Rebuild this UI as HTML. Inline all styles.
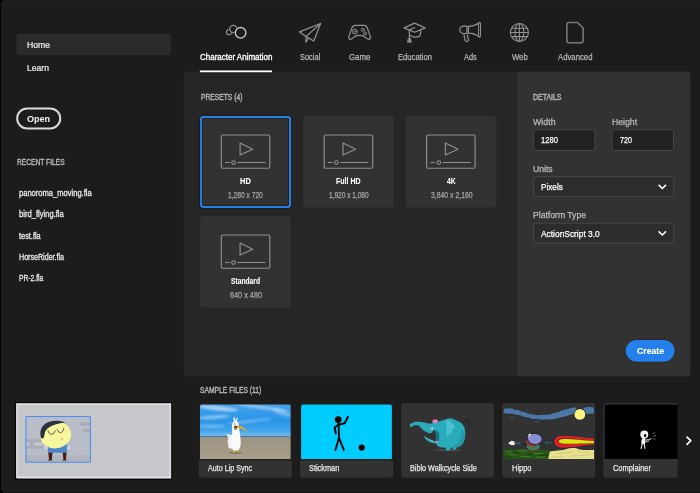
<!DOCTYPE html>
<html lang="en">
<head>
<meta charset="utf-8">
<title>New Document</title>
<style>
html,body{margin:0;padding:0;}
body{width:700px;height:493px;overflow:hidden;background:#1c1c1c;position:relative;font-family:"Liberation Sans",sans-serif;}
#ui{position:absolute;left:0;top:0;}
.t{position:absolute;white-space:nowrap;display:inline-block;transform-origin:0 50%;font-family:"Liberation Sans",sans-serif;}
</style>
</head>
<body>
<svg id="ui" width="700" height="493" viewBox="0 0 700 493">
  <!-- window frame -->
  <rect x="0" y="0" width="700" height="493" fill="#181818"/>
  <rect x="0" y="491.4" width="700" height="1.6" fill="#131313"/>
  <rect x="0" y="0" width="3" height="3" fill="#000"/>
  <rect x="0" y="489.5" width="3" height="3.5" fill="#000"/>
  <rect x="1.3" y="1.4" width="702" height="489.9" rx="3" fill="#1c1c1c" stroke="#252525" stroke-width="0.8"/>
  <rect x="0" y="0" width="0.9" height="493" fill="#000"/>

  <!-- sidebar -->
  <rect x="16.3" y="33.7" width="154.8" height="21.2" rx="2" fill="#2b2b2b"/>
  <rect x="17.2" y="108.4" width="43" height="20" rx="10" fill="none" stroke="#dadada" stroke-width="2"/>
  <!-- main panel -->
  <rect x="183.9" y="71.8" width="506.4" height="304.5" rx="3" fill="#262626"/>
  <path d="M517.3 71.8 H687.3 A3 3 0 0 1 690.3 74.8 V373.3 A3 3 0 0 1 687.3 376.3 H517.3 Z" fill="#323232"/>
  <!-- active tab underline -->
  <rect x="199" y="69.5" width="74" height="3.7" fill="#0c0c0c"/>
  <rect x="199.8" y="70.4" width="72.3" height="1.9" fill="#ffffff"/>
  <rect x="200.2" y="116" width="90.6" height="91.6" rx="3" fill="#323232"/>
  <rect x="199.29999999999998" y="115.1" width="92.39999999999999" height="93.39999999999999" rx="3.6" fill="none" stroke="#1a0f08" stroke-opacity="0.55" stroke-width="1"/>
  <rect x="202.5" y="118.2" width="86.19999999999999" height="87.19999999999999" rx="1.2" fill="none" stroke="#231811" stroke-width="0.7"/>
  <rect x="201.1" y="116.9" width="89.0" height="90.0" rx="2.4" fill="none" stroke="#2680eb" stroke-width="2"/>
  <g transform="translate(220.1 133.6)" fill="none" stroke="#909090" stroke-width="1.15"><rect x="1.2" y="1.4" width="48.5" height="33.2" rx="1.5"/><path d="M20 9.5 L32.6 15.6 L20 21.4 Z" stroke-linejoin="round"/><path d="M5 28.9 H9.6 M17.2 28.9 H45.4"/><circle cx="13.4" cy="28.9" r="1.8"/></g>
  <rect x="303.1" y="116" width="90.6" height="91.6" rx="3" fill="#323232"/>
  <g transform="translate(323.0 133.6)" fill="none" stroke="#909090" stroke-width="1.15"><rect x="1.2" y="1.4" width="48.5" height="33.2" rx="1.5"/><path d="M20 9.5 L32.6 15.6 L20 21.4 Z" stroke-linejoin="round"/><path d="M5 28.9 H9.6 M17.2 28.9 H45.4"/><circle cx="13.4" cy="28.9" r="1.8"/></g>
  <rect x="405.5" y="116" width="90.6" height="91.6" rx="3" fill="#323232"/>
  <g transform="translate(425.4 133.6)" fill="none" stroke="#909090" stroke-width="1.15"><rect x="1.2" y="1.4" width="48.5" height="33.2" rx="1.5"/><path d="M20 9.5 L32.6 15.6 L20 21.4 Z" stroke-linejoin="round"/><path d="M5 28.9 H9.6 M17.2 28.9 H45.4"/><circle cx="13.4" cy="28.9" r="1.8"/></g>
  <rect x="200.2" y="216" width="90.6" height="91.6" rx="3" fill="#323232"/>
  <g transform="translate(220.1 233.6)" fill="none" stroke="#909090" stroke-width="1.15"><rect x="1.2" y="1.4" width="48.5" height="33.2" rx="1.5"/><path d="M20 9.5 L32.6 15.6 L20 21.4 Z" stroke-linejoin="round"/><path d="M5 28.9 H9.6 M17.2 28.9 H45.4"/><circle cx="13.4" cy="28.9" r="1.8"/></g>
  <!-- form fields -->
  <rect x="533.6" y="129.7" width="61.4" height="20.8" rx="2.5" fill="#212121" stroke="#464646" stroke-width="1"/>
  <rect x="611.9" y="129.7" width="61.6" height="20.8" rx="2.5" fill="#212121" stroke="#464646" stroke-width="1"/>
  <rect x="533.6" y="176.6" width="140.2" height="19.9" rx="2.5" fill="#2c2c2c" stroke="#444444" stroke-width="1.1"/>
  <rect x="533.6" y="223.2" width="140.2" height="19.9" rx="2.5" fill="#2c2c2c" stroke="#444444" stroke-width="1.1"/>
  <!-- create -->
  <rect x="625.2" y="339.4" width="49.9" height="22.9" rx="11.45" fill="#2a2018"/>
  <rect x="625.7" y="339.9" width="48.9" height="21.9" rx="10.95" fill="#2680eb"/>

  <!-- tab icons -->
  <g fill="none" stroke-width="1.2" stroke-linecap="round" stroke-linejoin="round">

  <!-- character animation -->
  <g>
    <circle cx="229" cy="32.2" r="2.6" stroke="#8e8e8e" stroke-width="1.1"/>
    <circle cx="233.3" cy="29" r="4.6" fill="#1c1c1c" stroke="none"/>
    <circle cx="233.3" cy="29" r="3.6" stroke="#909090" stroke-width="1.2"/>
    <circle cx="240.6" cy="32.8" r="6.6" fill="#1c1c1c" stroke="none"/>
    <circle cx="240.6" cy="32.8" r="5.3" stroke="#c6c6c6" stroke-width="1.4"/>
  </g>
  <g stroke="#939393">
    <!-- social paper plane -->
    <path d="M320.6 23.5 L299.5 31.9 L306 36.6 L313.8 41 Z"/>
    <path d="M320.6 23.5 L306 36.6 L306 42.2 L308.5 38.1"/>
    <!-- game -->
    <path d="M355.3 25.4 H364 C366 25.4 367 26.8 367.6 28.7 L370.2 36.1 C370.8 38 370 39.2 368.6 39.3 C367.6 39.4 366.8 38.8 365.6 37.4 C364.2 36 362.4 35.4 359.6 35.4 C356.8 35.4 355 36 353.6 37.4 C352.4 38.8 351.6 39.4 350.6 39.3 C349.2 39.2 348.4 38 349 36.1 L351.6 28.7 C352.2 26.8 353.2 25.4 355.3 25.4 Z"/>
    <circle cx="354.9" cy="31.6" r="2.5" stroke-width="1"/>
    <circle cx="354.9" cy="31.6" r="0.7" stroke-width="0.9"/>
    <circle cx="362.7" cy="29.8" r="1.5" stroke-width="1"/>
    <circle cx="365" cy="33.4" r="1.5" stroke-width="1"/>
    <!-- education -->
    <path d="M414.5 23.1 L425.2 27.9 L414.5 32.2 L404.1 27.9 Z"/>
    <path d="M420.6 30 V33.5 C420.6 35.8 418 37.1 415.1 37.1 C413.2 37.1 411.6 36.4 410.4 35.4"/>
    <path d="M414.7 27.5 L409.4 30 V38.2"/>
    <path d="M408.7 38.4 H410.4 L411.4 42.2 H407.7 Z" fill="#8a8a8a" stroke-width="0.8"/>
    <!-- ads -->
    <path d="M467 26.1 H463.5 C461.4 26.1 459.8 27.8 459.8 29.8 C459.8 31.8 461.4 33.5 463.5 33.5 H467 Z"/>
    <path d="M468.4 26.4 C472 26.4 476.4 25 479.6 22.6 M468.4 33.2 C472 33.2 476.4 34.6 479.6 37 M468.4 26.4 V33.2"/>
    <path d="M479.7 22.5 L480.5 23 V36.6 L479.7 37.1 L478.6 35.6 V24 Z" stroke-width="1"/>
    <path d="M464 34.8 L465.2 40.6 C465.5 41.6 466.4 41.8 467.2 41.5 C468.2 41.2 468.7 40.6 468.5 39.8 L467.3 34.8"/>
    <!-- web -->
    <g stroke-width="1.05">
    <circle cx="519.4" cy="32.4" r="9"/>
    <ellipse cx="519.4" cy="32.4" rx="4.4" ry="9"/>
    <path d="M519.4 23.4 V41.4 M510.4 32.4 H528.4 M511.6 28.2 H527.2 M511.6 36.6 H527.2"/>
    </g>
    <!-- advanced -->
    <path d="M569 22.5 H577.4 L583.1 28 V40.8 C583.1 42 582.2 42.8 581.1 42.8 H569 C567.8 42.8 566.9 42 566.9 40.8 V24.5 C566.9 23.4 567.8 22.5 569 22.5 Z" stroke="#787878" stroke-width="1.6"/>
  </g>

  </g>
  <!-- select chevrons -->
  <g fill="none" stroke="#ffffff" stroke-width="1.55">
    <path d="M658.6 184.9 L662.3 188.5 L666 184.9"/>
    <path d="M658.6 231.4 L662.3 235 L666 231.4"/>
  </g>
  <!-- recent thumbnail -->
  <rect x="15.06" y="402.07" width="157.24" height="77.93" fill="#060606"/>
  <rect x="16.15" y="403.25" width="154.95" height="75.05" fill="#f3f3f6"/>
  <rect x="17.45" y="476.8" width="153.65" height="1.5" fill="#e6e8ee"/>
  <rect x="169.1" y="404.55" width="2" height="72.25" fill="#d2d5dd"/>
  <rect x="17.45" y="404.55" width="151.65" height="72.25" fill="#c5c7cb"/>
<clipPath id="rclip"><rect x="25.9" y="416.5" width="64.5" height="45.8"/></clipPath>
<g clip-path="url(#rclip)">
  <rect x="26" y="416.5" width="64.4" height="45.8" fill="#b9bdc8"/>
  <rect x="26" y="455.4" width="64.4" height="6.9" fill="#b0b4bf"/>
  <rect x="79.6" y="422.2" width="11" height="3" rx="1.5" fill="#a9acb4"/>
  <rect x="82.6" y="428.9" width="8" height="3" rx="1.5" fill="#a9acb4"/>
  <rect x="24" y="439.2" width="19" height="9.6" rx="2" fill="#aaadb6"/>
  <rect x="33.4" y="442.4" width="10" height="3.4" rx="1.7" fill="#c3c6cf"/>
  <rect x="24" y="442.4" width="6" height="3.4" rx="1.7" fill="#c3c6cf"/>
  <!-- arms -->
  <ellipse cx="45.6" cy="447.6" rx="2.5" ry="3.5" fill="#c9ccd6" stroke="#86a4d4" stroke-width="0.6"/>
  <ellipse cx="69.4" cy="447.6" rx="2.5" ry="3.5" fill="#c9ccd6" stroke="#86a4d4" stroke-width="0.6"/>
  <!-- legs -->
  <path d="M48.2 452 H52.6 L51.8 459.2 L52.4 460.4 H47.8 L49 459.2 Z" fill="#4a1b10"/>
  <path d="M62.6 452 H66.6 L66 459.2 L66.8 460.4 H62.4 L63.4 459.2 Z" fill="#4a1b10"/>
  <!-- body -->
  <path d="M48 444 H66.8 L66.8 452.8 H48 Z" fill="#4a86c9"/>
  <!-- head -->
  <ellipse cx="55.8" cy="435.2" rx="15.4" ry="13.2" fill="#f6f79c" transform="rotate(-12 55.8 435.2)"/>
  <!-- hair -->
  <path d="M41 438 C39.4 433 40.6 427 45.6 423.6 C51 420 59.4 420.2 65.4 422.6 C60 423 54 424.6 49.6 427 C46.4 428.8 45 431 44.6 434 C44.4 435.6 44 437 43.4 438.4 Z" fill="#2b303e"/>
  <!-- eyes -->
  <path d="M48 430.8 C48.8 435.4 54.2 435.6 55.2 430.8" stroke="#2b303e" stroke-width="0.8" fill="none" stroke-linecap="round"/>
  <path d="M57.2 429.6 C58.6 434 63.2 433.8 63.8 428.2" stroke="#2b303e" stroke-width="0.8" fill="none" stroke-linecap="round"/>
  <path d="M60.8 439.4 L62.2 438.4 L63 439.4" stroke="#e08a8a" stroke-width="0.7" fill="none" stroke-linecap="round"/>
</g>
  <rect x="25.9" y="416.5" width="64.5" height="45.8" rx="0.8" fill="none" stroke="#4b8df2" stroke-width="1.1"/>

  <!-- sample cards -->
  <clipPath id="sclip"><rect x="190" y="398" width="487.6" height="90"/></clipPath>
  <g clip-path="url(#sclip)">
    <clipPath id="imgclip"><path d="M0 55 V2.2 A2.2 2.2 0 0 1 2.2 0 H88.8 A2.2 2.2 0 0 1 91 2.2 V55 Z"/></clipPath>
    <!-- Auto Lip Sync -->
    <rect x="198.9" y="403.1" width="93" height="74.6" rx="3" fill="#323232"/>
    <path d="M198.9 460.4 V406.1 A3 3 0 0 1 201.9 403.1 H288.9 A3 3 0 0 1 291.9 406.1 V460.4 Z" fill="#231c19"/>
    <svg x="199.95" y="404.2" width="90.9" height="54.9" viewBox="0 0 91 55" preserveAspectRatio="none"><g clip-path="url(#imgclip)">
  <defs>
    <linearGradient id="sky" x1="0" y1="0" x2="0" y2="1">
      <stop offset="0" stop-color="#45a1ea"/><stop offset="0.5" stop-color="#2895e8"/><stop offset="0.82" stop-color="#43a4ea"/><stop offset="1" stop-color="#7fc2f0"/>
    </linearGradient>
    <linearGradient id="sand" x1="0" y1="0" x2="0" y2="1">
      <stop offset="0" stop-color="#9c9382"/><stop offset="1" stop-color="#a89e8b"/>
    </linearGradient>
    <filter id="bl" x="-20%" y="-50%" width="140%" height="200%"><feGaussianBlur stdDeviation="1.3"/></filter>
  </defs>
  <rect width="91" height="32.6" fill="url(#sky)"/>
  <g filter="url(#bl)" fill="#ffffff">
    <ellipse cx="18" cy="4" rx="20" ry="2.2" opacity="0.55" transform="rotate(6 18 4)"/>
    <ellipse cx="60" cy="3" rx="28" ry="1.6" opacity="0.4" transform="rotate(8 60 3)"/>
    <ellipse cx="14" cy="13" rx="16" ry="2" opacity="0.4" transform="rotate(-4 14 13)"/>
    <ellipse cx="50" cy="17" rx="22" ry="1.5" opacity="0.3" transform="rotate(-6 50 17)"/>
    <ellipse cx="12" cy="22" rx="14" ry="1.5" opacity="0.3"/>
    <ellipse cx="82" cy="8" rx="10" ry="3" opacity="0.3" transform="rotate(20 82 8)"/>
  </g>
  <rect y="31.8" width="91" height="1.1" fill="#3a74a8"/>
  <rect y="32.8" width="91" height="23" fill="url(#sand)"/>
  <ellipse cx="36" cy="48.5" rx="6" ry="1.2" fill="#5f584e" opacity="0.75"/>
  <path d="M34.2 46 L33 48 L35.4 48.2 M37.4 46 L38 47.8 L40 47.6" stroke="#e6b21c" stroke-width="1.1" stroke-linecap="round" stroke-linejoin="round" fill="none"/>
  <path d="M32.4 31 C30.4 30.8 28 30.2 26.6 29 C27.2 31.6 28 33.4 28.6 35 C27.8 35.2 27.6 36 27.8 37 C28 39.6 28 42 28.8 43.6 C29.8 44.6 31 44.8 32 44.6 Z" fill="#f1f1f1"/>
  <path d="M33.6 16.4 C33 14.4 33.6 12.8 35.2 12.2 C34.8 13.6 35 14.8 35.6 16 C36.2 14.6 37 13.6 38.2 13.4 C37.4 14.6 37.2 15.8 37.2 17 Z" fill="#f4f4f4"/>
  <path d="M35.4 16.8 C37.4 16.8 38.6 18.4 38.8 20.6 C39.2 24 39.6 27 40 30 C40.6 34 41.2 38 40.6 42 C40 45 38.4 46.6 35.8 46.6 C33 46.6 31.4 44.6 31.2 41.6 C31 37.6 31.8 33 32.2 29 C32.4 26 32 23 32.2 20.6 C32.4 18.4 33.6 16.8 35.4 16.8 Z" fill="#fafafa"/>
  <path d="M34.2 22 C35.4 21.2 37 21.4 37.8 22.2 C37.6 23.8 37 25.2 35.8 25.6 C34.6 25.4 34 24 34.2 22 Z" fill="#6e2a10"/>
  <ellipse cx="36" cy="24.2" rx="0.9" ry="0.8" fill="#e0a020"/>
  <path d="M37.4 21.2 C41.6 21.4 45.6 24 47.6 28.8 C44.6 25.6 41.4 24 37.8 23.6 Z" fill="#eaa91c"/>
  <circle cx="35" cy="19.8" r="0.6" fill="#555"/>
</g></svg>
    <!-- Stickman -->
    <rect x="300.0" y="403.1" width="93" height="74.6" rx="3" fill="#323232"/>
    <path d="M300.0 460.4 V406.1 A3 3 0 0 1 303.0 403.1 H390.0 A3 3 0 0 1 393.0 406.1 V460.4 Z" fill="#231c19"/>
    <svg x="301.05" y="404.2" width="90.9" height="54.9" viewBox="0 0 91 55" preserveAspectRatio="none"><g clip-path="url(#imgclip)">
  <rect width="91" height="55" fill="#00ccff"/>
  <g stroke="#000" stroke-width="1.9" fill="none" stroke-linecap="round" stroke-linejoin="round">
    <path d="M37.5 18 L38 33.6 M38 33.6 L34.4 45.8 M38 33.6 L42.8 45.8"/>
    <path d="M37.6 20.4 L43.7 19.1 L47 12.6"/>
    <path d="M37.6 20.4 L33.6 23.4 L34.8 29.4"/>
  </g>
  <circle cx="37.2" cy="15.4" r="3.4" fill="#000"/>
  <circle cx="60.7" cy="43.5" r="3.1" fill="#000"/>
  <path d="M36 6.6 H37.4 M36.2 7.6 L36.6 9" stroke="#1a5a70" stroke-width="0.6" fill="none"/>
</g></svg>
    <!-- Biblo Walkcycle Side -->
    <rect x="401.1" y="403.1" width="93" height="74.6" rx="3" fill="#323232"/>
    <svg x="402.15" y="404.2" width="90.9" height="54.9" viewBox="0 0 91 55" preserveAspectRatio="none"><g clip-path="url(#imgclip)">
  <ellipse cx="45.6" cy="45.9" rx="14" ry="0.8" fill="#5c5c5c" opacity="0.85"/>
  <path d="M61.1 17.8 C62.4 16.4 63.6 15.8 64.8 16 C66.6 16.2 67.8 17.4 67.6 19 C67.5 19.8 67.2 20.4 66.8 20.8" stroke="#1b1b1b" stroke-width="0.8" fill="none" stroke-linecap="round"/>
  <!-- body + trunk -->
  <path d="M7.6 20.6 C8 19.6 8.8 19.2 9.6 19.1 C11 18.2 12.4 17.7 13.6 17.6 C15.6 17.4 17.6 17.6 19.6 17.9 C22 18.3 24.4 19 26.6 19.4 C28 19.6 29.4 19.4 30.6 18.8 C32.6 18 34.6 17.6 36.6 17.3 C39 16.4 41.4 15.6 43.6 15.1 C45.4 14.6 47 14.2 48.6 14.1 C50.4 14.4 52 15.2 53.6 16.1 C55.8 16.8 57.8 17.8 59.6 19.1 C61 20.6 62 22.4 62.6 24.6 C63.1 27 63.3 29.4 63.1 31.6 C62.8 34.6 62 37.4 60.6 39.6 C59.4 41.2 57.6 42.4 55.6 43.1 L54.6 42.6 L54.1 45.1 C53 45.5 51.6 45.6 50.6 45.4 L50.1 43.4 L48.6 43.4 L48.1 46.1 C46.8 46.5 45.2 46.5 44.1 46.3 L43.6 43.4 C41 43.6 38.6 43.4 36.6 42.6 C35.4 41.8 34.4 40.6 33.6 39.4 C30.8 39.4 28.2 38.6 26.2 37.2 C24 35.8 22.4 33.8 21.4 31.4 C23.4 33.2 25.4 34.4 27.6 35.1 C29.4 36 31.2 37 33.1 37.6 C33.8 36 34.2 34.4 34 32.6 C33.8 30.2 33.4 28 32.6 26.1 L31.1 26.6 C30.4 27.8 29.6 28.8 28.6 29.1 C26.8 29.2 25.2 28.6 23.6 27.6 C22 26.8 20.8 25.8 19.6 24.6 C18.6 23.4 17.8 22.2 16.6 21.4 C14.8 20.8 12.8 21 11.1 21.4 C10.8 22 10.5 22.4 10.1 22.6 C9.6 22.9 9 22.9 8.6 22.6 C7.8 22.2 7.4 21.4 7.6 20.6 Z" fill="#2aabba"/>
  <!-- shading lower right -->
  <path d="M63.1 31.6 C62.8 34.6 62 37.4 60.6 39.6 C59.4 41.2 57.6 42.4 55.6 43.1 L50 43.4 C54 41 57.6 37 59 32 C59.6 29.6 59.6 27 59 24.6 C61 26.6 62.4 29 63.1 31.6 Z" fill="#2499a9"/>
  <!-- mouth -->
  <path d="M32.6 26.1 C34 26.2 35.2 26.8 36.1 27.6 C37 29.2 37.3 31 37.1 32.6 C37.1 34.2 37 35.8 36.6 37.1 C35.6 37.8 34.6 37.9 33.6 37.6 C34.1 36 34.3 34.4 34.1 32.6 C33.9 30.2 33.4 28 32.6 26.1 Z" fill="#167280"/>
  <ellipse cx="35" cy="37.6" rx="1.5" ry="0.9" fill="#ec7ab6"/>
  <!-- jaw highlight -->
  <path d="M21.6 31.6 C23.4 33.2 25.4 34.4 27.6 35.1 C29.4 36 31.2 37 33.1 37.6 L33 37.9 C31 37.5 29 36.5 27.3 35.6 C25.2 34.7 23.2 33.3 21.6 31.6 Z" fill="#6fd0da"/>
  <!-- ear -->
  <path d="M43.2 16.2 C46 16 48.6 17.4 50.6 19.6 C51.8 20.8 52.8 22.4 52.6 24.2 C51.6 25 50.4 25 49.4 24.6 C50.4 26 50.6 27.8 49.6 29.2 C48.6 29.8 47.4 29.6 46.4 29 C46.8 30.4 46.4 31.6 45.4 32.4 C44.4 30.6 44.2 28.6 44.6 26.6 C44.8 23.4 44.4 19.8 43.2 16.2 Z" fill="#49c2ce"/>
  <!-- hat -->
  <ellipse cx="33.1" cy="16.7" rx="3.2" ry="2.3" fill="#1f1f1f"/>
  <ellipse cx="33.1" cy="17.1" rx="2.9" ry="2" fill="#f07cba"/>
  <path d="M30 18.2 C32 19.2 34.4 19.2 36.2 18 L36.2 19 C34.4 19.9 32 19.9 30 19 Z" fill="#2aabba"/>
  <!-- eye -->
  <ellipse cx="29.5" cy="24.2" rx="1.3" ry="1.5" fill="#f0ecff"/>
  <circle cx="29.3" cy="23.8" r="0.75" fill="#5a3cc4"/>
</g></svg>
    <!-- Hippo -->
    <rect x="502.2" y="403.1" width="93" height="74.6" rx="3" fill="#323232"/>
    <svg x="503.25" y="404.2" width="90.9" height="54.9" viewBox="0 0 91 55" preserveAspectRatio="none"><g clip-path="url(#imgclip)">
  <!-- clouds -->
  <path d="M0 6 C1 4.4 3 3.6 5 4.6 C7 3.4 10 4.4 12 6 C14 5.4 16 6 17.4 7.4 C20 7 23 8.4 25 9.6 C28 9.6 31 10.6 34 11 C38 10.2 42 10.8 46 10.2 C50 9.6 53 8 56 7.6 C59 6 62 5.6 65 4.6 C68 3.4 71 3.6 73 3 L73 9.4 C70 9.8 68 10.6 65 11.2 C62 12.6 59 12.6 56 13.6 C52 15 47 15.6 42 15.4 C39 16 36 15.4 33 14.6 C30 15 27 14.2 25 13.2 C22 13.2 19 12.2 17 11 C14 11 11 10.4 9 9.4 C6 10 3 9.6 0 8.6 Z" fill="#4a77a6"/>
  <path d="M80 4 C83 2.6 87 2.4 91 3.4 L91 9 C88 9.8 85 9.4 82 9.8 Z" fill="#4a77a6"/>
  <path d="M6 12.6 C8 12.2 10 12.8 11.6 13.6 C9.6 14 7.6 13.6 6 12.6 Z M31 17 C33 16.6 35 17 36.4 17.6 C34.4 18 32.6 17.8 31 17 Z M22 5.4 C23.4 5 24.6 5.4 25.4 6 C24 6.4 23 6.2 22 5.4 Z" fill="#41698f"/>
  <circle cx="76.7" cy="10.2" r="6.1" fill="#1c2a4a"/>
  <circle cx="76.7" cy="10.2" r="5.4" fill="#fff27e"/>
  <!-- sand -->
  <path d="M43 47.4 C50 46.8 56 46.6 61 45.6 C64 45 67 43 69.4 43.1 C72 43.4 75 45.4 80 45.9 C84 46.2 88 45.6 91 45.8 L91 55 L43 55 Z" fill="#e7e190"/>
  <path d="M52 50 C58 48.6 64 49.4 70 47.6 M66 52.4 C72 51 82 52 90 50 M74 47 C78 47.6 82 48.6 86 48 M48 53 C52 52.4 56 52.8 60 52" stroke="#c2bb68" stroke-width="0.6" fill="none"/>
  <!-- grass -->
  <path d="M0 46 L2 44.6 L4 46 L7 44.2 L10 45.8 L13 44.6 L16 46 L19 44.4 L23 45.8 L27 45 L31 46 L36 45.2 L40 46.2 L44 45.4 L46.8 46.8 L45 55 L0 55 Z" fill="#27561a"/>
  <path d="M3 47.6 H9 M14 46.6 H24 M6 50.6 H13 M18 52.4 H27 M30 49.4 H41 M33 53 H42" stroke="#5a8a2c" stroke-width="0.9" fill="none" opacity="0.8"/>
  <path d="M10 49 H16 M24 50 H30 M2 53 H10 M36 51 H44" stroke="#163a10" stroke-width="1" fill="none"/>
  <!-- beam -->
  <path d="M91 33.8 C80 32.6 68 30.4 58 30.6 C53 30.8 50 33.8 50 37.4 C50 41.2 53 44.2 58 44.4 C68 44.6 80 42 91 41 Z" fill="#16333a"/>
  <path d="M91 34.4 C80 33.3 68 31.3 58.4 31.5 C54 31.7 51 34.2 51 37.4 C51 40.8 54 43.3 58.4 43.5 C68 43.7 80 41.2 91 40.3 Z" fill="#df2026"/>
  <path d="M91 36.4 C82 36 68 34 60 34.2 C56.4 34.3 54.4 35.6 54.4 37.2 C54.4 39 56.4 40 60 40 C68 40.2 82 39.6 91 39.4 Z" fill="#7a1a10"/>
  <path d="M91 36.8 C82 36.4 68 34.6 60.4 34.8 C57.4 34.9 55.4 35.9 55.4 37.2 C55.4 38.6 57.4 39.4 60.4 39.5 C68 39.6 82 39.2 91 39 Z" fill="#d9e610"/>
  <!-- hippo -->
  <path d="M22.6 41 C22 44 25 46.6 30 46.6 C35 46.6 37.8 44.4 37.4 41.4 Z" fill="#1d2a28"/>
  <ellipse cx="30" cy="42.6" rx="6.8" ry="3.6" fill="#3c7c64"/>
  <path d="M24.4 45.2 C28 46.2 33 46.2 36.2 45 L36 46 C32 47 28 47 24.6 46.2 Z" fill="#7a4a1c"/>
  <path d="M22.8 36.6 C22.6 39.6 25 41.8 29 42.4 C31 42.6 32.6 42.2 33.6 41.4 L30 38.6 L24.4 35.6 Z" fill="#a3302a"/>
  <path d="M23.8 35 C22.6 31.6 25 28.8 29 29.2 C33 28.6 38.4 30 39.2 33.8 C39.8 37.6 36.6 40.6 32 40.6 C28 40.6 24.8 38.6 23.8 35 Z" fill="#1a1f33"/>
  <path d="M24.6 34.8 C23.6 32 25.6 29.8 29 30 C33 29.4 37.8 30.8 38.4 34 C38.9 37.2 36 39.8 32 39.8 C28.4 39.8 25.6 38 24.6 34.8 Z" fill="#8b8dd2"/>
  <circle cx="26.6" cy="30.9" r="1.4" fill="#f8f8f8"/>
  <circle cx="27" cy="31.2" r="0.5" fill="#111"/>
  <path d="M37 40.4 L42 39.2" stroke="#1d2a28" stroke-width="1.2" fill="none"/>
  <path d="M41.6 37.8 H49.4 V39.2 H44 L43.4 40.2 H42 Z" fill="#2f5a66"/>
  <path d="M23 40.4 L17.4 39.6" stroke="#1d2a28" stroke-width="1.2" fill="none"/>
  <path d="M17.4 38.2 H12 V40.2 H16 L16.4 41 H17.4 Z" fill="#2f5a66"/>
  <path d="M11.4 37.4 L8.2 36.6 L4.8 39 L8.2 41.2 L11.4 40.8 Z" fill="#ececec"/>
</g></svg>
    <!-- Complainer -->
    <rect x="603.3" y="403.1" width="93" height="74.6" rx="3" fill="#323232"/>
    <svg x="604.35" y="404.2" width="90.9" height="54.9" viewBox="0 0 91 55" preserveAspectRatio="none"><g clip-path="url(#imgclip)">
  <rect width="91" height="55" fill="#000"/>
  <circle cx="40" cy="30.4" r="4" fill="#f4f4f4"/>
  <ellipse cx="40.8" cy="31.4" rx="1.3" ry="1.6" fill="#000"/>
  <path d="M38.6 33.6 C36.8 35.6 36.6 38.4 37.4 40.2 L40.4 40.2 C41 38 41 35.6 40.6 33.8 Z" fill="#f2f2f2"/>
  <path d="M37.8 40 L36.8 44.4 M40 40 L40.6 44.2" stroke="#f2f2f2" stroke-width="1.1" stroke-linecap="round"/>
  <path d="M40 36 L44.6 35.6 L46.8 34.6 M41 38 L44.4 36.8" stroke="#f2f2f2" stroke-width="0.9" stroke-linecap="round" fill="none"/>
  <path d="M48.4 29.6 L50.6 28.4 M49 32 L51.4 31.6 M48.8 34.6 L50.8 35.4" stroke="#bdbdbd" stroke-width="0.5" stroke-linecap="round"/>
</g></svg>
  </g>
  <path d="M687 437.1 L690.8 440.7 L687 444.3" fill="none" stroke="#ffffff" stroke-width="1.7" stroke-linecap="round" stroke-linejoin="round"/>
</svg>

<nav class="sidebar">
<span class="t" style="left:27.0px;top:40px;font-size:10px;line-height:10px;color:#ececec;font-weight:400;-webkit-text-stroke:0.25px #ececec;transform-origin:0 8px;transform:scale(0.866,0.88);">Home</span>
<span class="t" style="left:27.0px;top:63px;font-size:10px;line-height:10px;color:#ececec;font-weight:400;-webkit-text-stroke:0.25px #ececec;transform-origin:0 8px;transform:scale(0.856,0.88);">Learn</span>
<span class="t" style="left:27.0px;top:114px;font-size:9.6px;line-height:9.6px;color:#f2f2f2;font-weight:700;transform:scaleX(0.942);">Open</span>
<span class="t" style="left:16.6px;top:158px;font-size:8.7px;line-height:8.7px;color:#b8b8b8;font-weight:400;-webkit-text-stroke:0.4px #b8b8b8;transform-origin:0 7px;transform:scale(0.766,0.94);">RECENT FILES</span>
<span class="t" style="left:18.8px;top:190px;font-size:7.6px;line-height:7.6px;color:#ececec;font-weight:400;-webkit-text-stroke:0.25px #ececec;transform-origin:0 6px;transform:scale(0.995,1.1);">panoroma_moving.fla</span>
<span class="t" style="left:18.8px;top:211px;font-size:7.6px;line-height:7.6px;color:#ececec;font-weight:400;-webkit-text-stroke:0.25px #ececec;transform-origin:0 6px;transform:scale(1.001,1.1);">bird_flying.fla</span>
<span class="t" style="left:18.8px;top:233px;font-size:7.6px;line-height:7.6px;color:#ececec;font-weight:400;-webkit-text-stroke:0.25px #ececec;transform-origin:0 6px;transform:scale(0.970,1.1);">test.fla</span>
<span class="t" style="left:18.8px;top:254px;font-size:7.6px;line-height:7.6px;color:#ececec;font-weight:400;-webkit-text-stroke:0.25px #ececec;transform-origin:0 6px;transform:scale(0.937,1.1);">HorseRider.fla</span>
<span class="t" style="left:18.8px;top:275px;font-size:7.6px;line-height:7.6px;color:#ececec;font-weight:400;-webkit-text-stroke:0.25px #ececec;transform-origin:0 6px;transform:scale(0.886,1.1);">PR-2.fla</span>
</nav>
<nav class="categories">
<span class="t" style="left:199.7px;top:52px;font-size:9.5px;line-height:9.5px;color:#ffffff;font-weight:400;-webkit-text-stroke:0.35px #ffffff;transform:scaleX(0.841);">Character Animation</span>
<span class="t" style="left:299.7px;top:52px;font-size:9.5px;line-height:9.5px;color:#b8b8b8;font-weight:400;-webkit-text-stroke:0.25px #b8b8b8;transform:scaleX(0.785);">Social</span>
<span class="t" style="left:348.9px;top:52px;font-size:9.5px;line-height:9.5px;color:#b8b8b8;font-weight:400;-webkit-text-stroke:0.25px #b8b8b8;transform:scaleX(0.827);">Game</span>
<span class="t" style="left:397.9px;top:52px;font-size:9.5px;line-height:9.5px;color:#b8b8b8;font-weight:400;-webkit-text-stroke:0.25px #b8b8b8;transform:scaleX(0.804);">Education</span>
<span class="t" style="left:463.9px;top:52px;font-size:9.5px;line-height:9.5px;color:#b8b8b8;font-weight:400;-webkit-text-stroke:0.25px #b8b8b8;transform:scaleX(0.776);">Ads</span>
<span class="t" style="left:511.9px;top:52px;font-size:9.5px;line-height:9.5px;color:#b8b8b8;font-weight:400;-webkit-text-stroke:0.25px #b8b8b8;transform:scaleX(0.810);">Web</span>
<span class="t" style="left:557.6px;top:52px;font-size:9.5px;line-height:9.5px;color:#b8b8b8;font-weight:400;-webkit-text-stroke:0.25px #b8b8b8;transform:scaleX(0.816);">Advanced</span>
</nav>
<section class="presets">
<span class="t" style="left:200.7px;top:93px;font-size:8.7px;line-height:8.7px;color:#b8b8b8;font-weight:400;-webkit-text-stroke:0.4px #b8b8b8;transform-origin:0 7px;transform:scale(0.772,0.94);">PRESETS (4)</span>
<span class="t" style="left:240.2px;top:177px;font-size:8.5px;line-height:8.5px;color:#ffffff;font-weight:700;-webkit-text-stroke:0.1px #ffffff;transform:scaleX(0.888);">HD</span>
<span class="t" style="left:228.3px;top:191px;font-size:8.5px;line-height:8.5px;color:#a6a6a6;font-weight:400;-webkit-text-stroke:0.25px #a6a6a6;transform:scaleX(0.783);">1,280 x 720</span>
<span class="t" style="left:336.2px;top:177px;font-size:8.5px;line-height:8.5px;color:#ffffff;font-weight:700;-webkit-text-stroke:0.1px #ffffff;transform:scaleX(0.824);">Full HD</span>
<span class="t" style="left:328.7px;top:191px;font-size:8.5px;line-height:8.5px;color:#a6a6a6;font-weight:400;-webkit-text-stroke:0.25px #a6a6a6;transform:scaleX(0.769);">1,920 x 1,080</span>
<span class="t" style="left:447.0px;top:177px;font-size:8.5px;line-height:8.5px;color:#ffffff;font-weight:700;-webkit-text-stroke:0.1px #ffffff;transform:scaleX(0.791);">4K</span>
<span class="t" style="left:430.5px;top:191px;font-size:8.5px;line-height:8.5px;color:#a6a6a6;font-weight:400;-webkit-text-stroke:0.25px #a6a6a6;transform:scaleX(0.808);">3,840 x 2,160</span>
<span class="t" style="left:231.2px;top:277px;font-size:8.5px;line-height:8.5px;color:#ffffff;font-weight:700;-webkit-text-stroke:0.1px #ffffff;transform:scaleX(0.787);">Standard</span>
<span class="t" style="left:229.7px;top:291px;font-size:8.5px;line-height:8.5px;color:#a6a6a6;font-weight:400;-webkit-text-stroke:0.25px #a6a6a6;transform:scaleX(0.857);">640 x 480</span>
</section>
<section class="details">
<span class="t" style="left:532.8px;top:93px;font-size:8.7px;line-height:8.7px;color:#b8b8b8;font-weight:400;-webkit-text-stroke:0.4px #b8b8b8;transform-origin:0 7px;transform:scale(0.801,0.94);">DETAILS</span>
<span class="t" style="left:532.6px;top:117px;font-size:9.5px;line-height:9.5px;color:#bebebe;font-weight:400;-webkit-text-stroke:0.25px #bebebe;transform:scaleX(0.930);">Width</span>
<span class="t" style="left:611.5px;top:117px;font-size:9.5px;line-height:9.5px;color:#bebebe;font-weight:400;-webkit-text-stroke:0.25px #bebebe;transform:scaleX(0.914);">Height</span>
<span class="t" style="left:541.4px;top:135px;font-size:9.5px;line-height:9.5px;color:#ffffff;font-weight:400;-webkit-text-stroke:0.25px #ffffff;transform:scaleX(0.804);">1280</span>
<span class="t" style="left:620.0px;top:135px;font-size:9.5px;line-height:9.5px;color:#ffffff;font-weight:400;-webkit-text-stroke:0.25px #ffffff;transform:scaleX(0.757);">720</span>
<span class="t" style="left:532.6px;top:164px;font-size:9.5px;line-height:9.5px;color:#bebebe;font-weight:400;-webkit-text-stroke:0.25px #bebebe;transform:scaleX(0.910);">Units</span>
<span class="t" style="left:541.4px;top:182px;font-size:9.5px;line-height:9.5px;color:#ffffff;font-weight:400;-webkit-text-stroke:0.25px #ffffff;transform:scaleX(0.860);">Pixels</span>
<span class="t" style="left:532.6px;top:210px;font-size:9.5px;line-height:9.5px;color:#bebebe;font-weight:400;-webkit-text-stroke:0.25px #bebebe;transform:scaleX(0.907);">Platform Type</span>
<span class="t" style="left:541.4px;top:229px;font-size:9.5px;line-height:9.5px;color:#ffffff;font-weight:400;-webkit-text-stroke:0.25px #ffffff;transform:scaleX(0.882);">ActionScript 3.0</span>
<span class="t" style="left:636.5px;top:346px;font-size:9.6px;line-height:9.6px;color:#ffffff;font-weight:700;-webkit-text-stroke:0.1px #ffffff;transform:scaleX(0.907);">Create</span>
</section>
<section class="sample-files">
<span class="t" style="left:199.8px;top:386px;font-size:8.7px;line-height:8.7px;color:#b8b8b8;font-weight:400;-webkit-text-stroke:0.4px #b8b8b8;transform-origin:0 7px;transform:scale(0.776,0.94);">SAMPLE FILES (11)</span>
<span class="t" style="left:208.0px;top:464px;font-size:8.5px;line-height:8.5px;color:#e8e8e8;font-weight:400;-webkit-text-stroke:0.25px #e8e8e8;transform:scaleX(0.841);">Auto Lip Sync</span>
<span class="t" style="left:308.7px;top:464px;font-size:8.5px;line-height:8.5px;color:#e8e8e8;font-weight:400;-webkit-text-stroke:0.25px #e8e8e8;transform:scaleX(0.866);">Stickman</span>
<span class="t" style="left:409.9px;top:464px;font-size:8.5px;line-height:8.5px;color:#e8e8e8;font-weight:400;-webkit-text-stroke:0.25px #e8e8e8;transform:scaleX(0.851);">Biblo Walkcycle Side</span>
<span class="t" style="left:511.8px;top:464px;font-size:8.5px;line-height:8.5px;color:#e8e8e8;font-weight:400;-webkit-text-stroke:0.25px #e8e8e8;transform:scaleX(0.878);">Hippo</span>
<span class="t" style="left:612.7px;top:464px;font-size:8.5px;line-height:8.5px;color:#e8e8e8;font-weight:400;-webkit-text-stroke:0.25px #e8e8e8;transform:scaleX(0.872);">Complainer</span>
</section>
</body>
</html>
